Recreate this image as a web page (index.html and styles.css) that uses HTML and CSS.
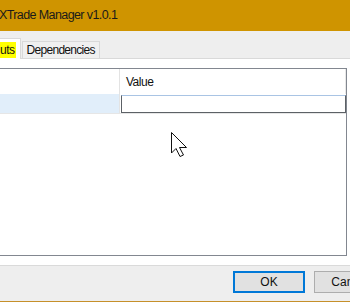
FILE: index.html
```html
<!DOCTYPE html>
<html>
<head>
    <title>XTrade Manager v1.0.1</title>
    <meta charset="UTF-8">
    <link rel="stylesheet" href="styles.css">
</head>
<body>
    <div class="window">
        <div class="titlebar">XTrade Manager v1.0.1</div>

        <div class="tabstrip">
            <div class="tab tab-active"><span class="mark">uts</span></div>
            <div class="tab">Dependencies</div>
        </div>

        <div class="page">
            <div class="grid">
                <div class="grid-row grid-head">
                    <div class="cell cell-name"></div>
                    <div class="cell cell-value">Value</div>
                </div>
                <div class="grid-row">
                    <div class="cell cell-name selected"></div>
                    <div class="cell cell-value"><input type="text" class="value-input"></div>
                </div>
            </div>
        </div>

        <div class="footer">
            <button class="btn btn-default">OK</button>
            <button class="btn">Cancel</button>
        </div>

        <!-- mouse pointer -->
        <svg class="pointer" width="18" height="26" viewBox="0 0 18 26">
            <path d="M0.5 0.5 V21 L5 16.5 L9 24.5 L12.5 23 L8.5 15.5 H15.5 Z" fill="#fff" stroke="#111" stroke-width="1" stroke-linejoin="miter"/>
        </svg>
    </div>
</body>
</html>
```

FILE: styles.css
```css
* { margin: 0; padding: 0; box-sizing: border-box; }
body { font-family: 'Liberation Sans', Arial, sans-serif; font-size: 12px; letter-spacing: -0.5px; color: #111; background: #eee; }
.window { position: relative; width: 350px; height: 302px; overflow: hidden; display: flex; flex-direction: column; }
.titlebar { height: 31px; background: #cf9400; line-height: 31px; color: #1a1a1a; font-size: 12.5px; letter-spacing: -0.6px; white-space: nowrap; margin-left: -1px; }
.tabstrip { height: 28px; background: #eee; border-bottom: 1px solid #d9d9d9; display: flex; align-items: flex-end; }
.tab { height: 18px; margin-bottom: -1px; padding: 0 4px; border: 1px solid #d9d9d9; background: #f0f0f0; line-height: 17px; letter-spacing: -0.7px; white-space: nowrap; margin-left: 1px; }
.tab-active { height: 21px; background: #fff; border-left: none; border-bottom: none; padding: 3px 4px 0 0; margin-left: 0; letter-spacing: -0.5px; }
.mark { background: #ffff00; padding: 1px 1px 1px 0; }
.page { flex: 1; background: #fff; padding: 9px 3px 9px 0; border-bottom: 1px solid #dadada; display: flex; }
.grid { flex: 1; border: 1px solid #828790; border-left: none; background: #fff; }
.grid-row { display: flex; }
.grid-head { height: 25px; }
.grid-row + .grid-row { height: 20px; border-bottom: 1px solid #e6e6e6; }
.cell { border-right: 1px solid #e3e3e3; }
.cell-name { width: 120px; }
.cell-value { flex: 1; padding: 6px 0 0 6px; border-right: 1px solid #e8e8e8; }
.grid-row + .grid-row .cell-value { padding: 1px 0 0 1px; border-right: none; }
.selected { background: #e1eefa; }
.value-input { display: block; width: 225px; height: 18px; border: 1px solid #5c6166; border-top-color: #a9c4e4; outline: none; background: #fff; }
.footer { height: 36px; background: #eee; border-bottom: 1px solid #c6902a; display: flex; align-items: flex-start; padding: 5px 0 0 233px; gap: 9px; }
.btn { flex-shrink: 0; width: 72px; height: 22px; font-family: inherit; font-size: 12px; letter-spacing: 0; color: #111; background: #e1e1e1; border: 1px solid #adadad; }
.btn-default { border: 2px solid #0078d7; }
.pointer { position: absolute; left: 171px; top: 132px; }
```
